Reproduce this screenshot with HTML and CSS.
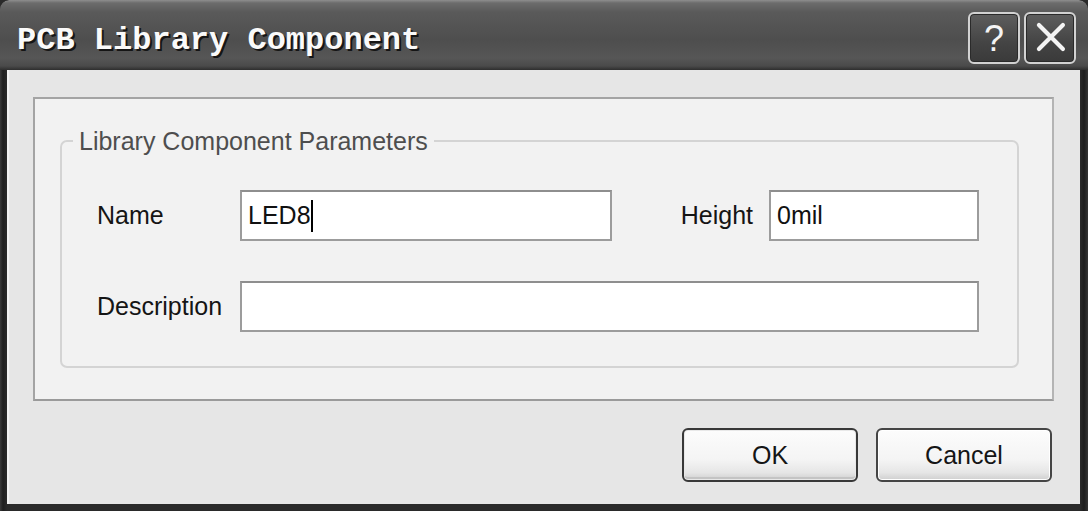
FILE: index.html
```html
<!DOCTYPE html>
<html lang="en">
<head>
<meta charset="utf-8">
<title>PCB Library Component</title>
<link rel="stylesheet" href="styles.css">
</head>
<body>
<div class="window">
  <div class="titlebar">
    <div class="title">PCB Library Component</div>
    <div class="title-buttons">
      <div class="tbtn help">?</div>
      <div class="tbtn close">
        <svg viewBox="0 0 52 52" width="48" height="48"><path d="M14 12 L40 38 M40 12 L14 38" stroke="#f4f4f4" stroke-width="4.5" stroke-linecap="round" fill="none"/></svg>
      </div>
    </div>
  </div>
  <div class="client">
    <div class="panel">
      <fieldset class="group">
        <legend class="legend">Library Component Parameters</legend>
        <div class="grid">
          <div class="label">Name</div>
          <div class="field">LED8<span class="caret"></span></div>
          <div class="label right">Height</div>
          <div class="field">0mil</div>
          <div class="label">Description</div>
          <div class="field wide"></div>
        </div>
      </fieldset>
    </div>
    <div class="actions">
      <div class="btn default">OK</div>
      <div class="btn">Cancel</div>
    </div>
  </div>
</div>
</body>
</html>
```
FILE: styles.css
```css
html, body {
  margin: 0;
  padding: 0;
  background: #2a2a2a;
}
.window {
  width: 1088px;
  height: 511px;
  background: linear-gradient(to right, #3a3a3a 0, #1f1f1f 3px, #2a2a2a 7px, #2a2a2a 1080px, #1c1c1c 1084px, #333 1088px);
  border-radius: 9px 9px 0 0;
  display: flex;
  flex-direction: column;
  overflow: hidden;
  font-family: "Liberation Sans", Arial, sans-serif;
}
.titlebar {
  height: 70px;
  flex: none;
  display: flex;
  align-items: center;
  justify-content: space-between;
  padding: 0 12px 0 17px;
  border-radius: 9px 9px 0 0;
  background: linear-gradient(to bottom, #8e8e8e 0, #6c6c6c 3px, #5a5a5a 12px, #4e4e4e 40px, #565656 58px, #4a4a4a 66px, #2e2e2e 70px);
}
.title {
  font-family: "Liberation Mono", "Courier New", monospace;
  font-weight: bold;
  font-size: 32px;
  color: #fafafa;
  text-shadow: 2px 2px 0 #151515;
  padding-top: 10px;
}
.title-buttons {
  display: flex;
  gap: 4px;
  align-self: flex-start;
  margin-top: 12px;
}
.tbtn {
  width: 52px;
  height: 52px;
  box-sizing: border-box;
  border: 2px solid #d2d2d2;
  border-radius: 6px;
  background: linear-gradient(to bottom, #5e5e5e, #444 60%, #3a3a3a);
  box-shadow: inset 0 0 0 1px #2a2a2a;
  display: flex;
  align-items: center;
  justify-content: center;
  color: #f4f4f4;
}
.help {
  font-family: "Liberation Sans", Arial, sans-serif;
  font-size: 36px;
  line-height: 1;
  padding-top: 2px;
}
.client {
  flex: 1;
  margin: 0 8px 7px 7px;
  background: #e6e6e6;
  border-left: 2px solid #f2f2f2;
  padding: 27px 26px 0 24px;
  display: flex;
  flex-direction: column;
}
.panel {
  height: 304px;
  box-sizing: border-box;
  border: 2px solid #a4a4a4;
  border-right-color: #b4b4b4;
  border-bottom-color: #9a9a9a;
  background: #f2f2f2;
  padding: 28px 33px 0 25px;
}
.group {
  margin: 0;
  border: 2px solid #d4d4d4;
  border-radius: 7px;
  padding: 35px 38px 34px 0;
}
.legend {
  margin-left: 11px;
  padding: 0 6px;
  font-size: 25px;
  line-height: 28px;
  color: #4e4e4e;
}
.grid {
  margin-left: 35px;
  display: grid;
  grid-template-columns: 143px 372px 157px 210px;
  grid-auto-rows: 51px;
  row-gap: 40px;
  align-items: center;
}
.label {
  font-size: 25px;
  color: #151515;
}
.label.right {
  justify-self: end;
  padding-right: 16px;
}
.field {
  height: 51px;
  box-sizing: border-box;
  border: 2px solid #9c9c9c;
  border-top-color: #8e8e8e;
  background: #fff;
  font-size: 25px;
  color: #111;
  padding: 0 6px;
  display: flex;
  align-items: center;
}
.field.wide {
  grid-column: 2 / 5;
}
.caret {
  display: inline-block;
  width: 2px;
  height: 32px;
  background: #000;
}
.actions {
  display: flex;
  justify-content: flex-end;
  gap: 18px;
  margin-top: 27px;
  padding-right: 2px;
}
.btn {
  width: 176px;
  height: 54px;
  box-sizing: border-box;
  border: 2px solid #454545;
  border-radius: 6px;
  background: linear-gradient(to bottom, #fcfcfc 0, #f4f4f4 60%, #e6e6e6 85%, #cfcfcf 100%);
  box-shadow: inset 0 0 0 1px #ffffff;
  display: flex;
  align-items: center;
  justify-content: center;
  font-size: 25px;
  color: #151515;
}
.btn.default {
  border-color: #383838;
  box-shadow: inset 0 0 0 1px #e8e8e8, inset 0 -3px 0 #c4c4c4;
}
```
